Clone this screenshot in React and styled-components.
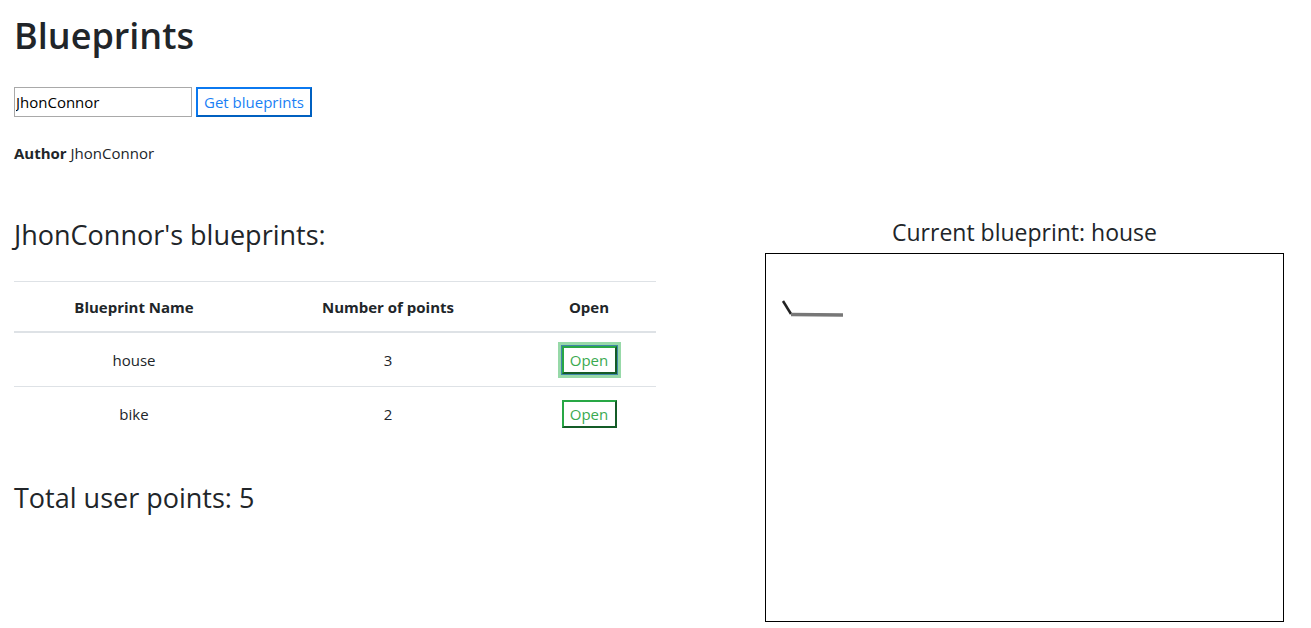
import React from "react";
import styled, { createGlobalStyle } from "styled-components";

const GlobalStyle = createGlobalStyle`
  body {
    margin: 0;
    background: #fff;
    color: #212529;
    font-family: "Open Sans", "Noto Sans", sans-serif;
  }
`;

const blueprints = [
  { name: "house", points: 3, focused: true },
  { name: "bike", points: 2 },
];

const Page = styled.div`
  padding: 0 14px;
`;

const Title = styled.h1`
  margin: 12px 0 0;
  font-size: 36px;
  font-weight: 600;
  line-height: 48px;
`;

const SearchForm = styled.div`
  display: flex;
  align-items: center;
  gap: 4px;
  margin-top: 27px;
`;

const AuthorInput = styled.input`
  box-sizing: border-box;
  width: 178px;
  height: 30px;
  padding: 0 1px;
  border: 1px solid #a9a9a9;
  font: inherit;
  font-size: 15px;
  color: #000;
`;

const GetButton = styled.button`
  box-sizing: border-box;
  height: 30px;
  padding: 0 6px;
  background: #fff;
  border: 2px solid #0b79f0;
  border-right-color: #0060c0;
  border-bottom-color: #0060c0;
  color: #1a7ff5;
  font: inherit;
  font-size: 15px;
`;

const AuthorLine = styled.p`
  margin: 24px 0 0;
  font-size: 15px;
  line-height: 24px;
`;

const Columns = styled.div`
  display: flex;
  gap: 109px;
  margin-top: 52px;
`;

const LeftColumn = styled.div`
  width: 642px;
`;

const SectionTitle = styled.h3`
  margin: 2px 0 0;
  font-size: 27px;
  font-weight: 500;
  line-height: 1.2;
`;

const Table = styled.table`
  width: 100%;
  margin-top: 30px;
  border-collapse: collapse;
  font-size: 15px;
  text-align: center;
`;

const HeadCell = styled.th`
  height: 49px;
  padding: 0;
  font-weight: 700;
  border-top: 1px solid #dee2e6;
  border-bottom: 2px solid #dee2e6;
  width: ${(p) => p.$w}px;
`;

const Cell = styled.td`
  height: 53px;
  padding: 0;
  border-bottom: ${(p) => (p.$last ? "none" : "1px solid #dee2e6")};
`;

const OpenButton = styled.button`
  box-sizing: border-box;
  width: 55px;
  height: 28px;
  padding: 0;
  background: #fff;
  border: 2px solid #28a745;
  border-right-color: #145c27;
  border-bottom-color: #145c27;
  color: #3aaa4f;
  font: inherit;
  font-size: 15px;
  box-shadow: ${(p) =>
    p.$focused ? "0 0 0 1px #3f86a8, 0 0 0 4px #97d9a8" : "none"};
`;

const TotalPoints = styled.h3`
  margin: 42px 0 0;
  font-size: 27px;
  font-weight: 500;
  line-height: 1.2;
`;

const RightColumn = styled.div`
  width: 519px;
  display: flex;
  flex-direction: column;
  align-items: center;
`;

const CanvasTitle = styled.h4`
  margin: 2px 0 0;
  font-size: 23px;
  font-weight: 500;
  line-height: 1.2;
`;

const Canvas = styled.div`
  box-sizing: border-box;
  width: 519px;
  height: 369px;
  margin-top: 6px;
  border: 1px solid #000;
`;

export default function App() {
  return (
    <>
      <GlobalStyle />
      <Page>
        <Title>Blueprints</Title>
        <SearchForm>
          <AuthorInput defaultValue="JhonConnor" />
          <GetButton>Get blueprints</GetButton>
        </SearchForm>
        <AuthorLine>
          <b>Author</b> JhonConnor
        </AuthorLine>
        <Columns>
          <LeftColumn>
            <SectionTitle>JhonConnor's blueprints:</SectionTitle>
            <Table>
              <thead>
                <tr>
                  <HeadCell $w={240}>Blueprint Name</HeadCell>
                  <HeadCell $w={268}>Number of points</HeadCell>
                  <HeadCell $w={134}>Open</HeadCell>
                </tr>
              </thead>
              <tbody>
                {blueprints.map((bp, i) => {
                  const last = i === blueprints.length - 1;
                  return (
                    <tr key={bp.name}>
                      <Cell $last={last}>{bp.name}</Cell>
                      <Cell $last={last}>{bp.points}</Cell>
                      <Cell $last={last}>
                        <OpenButton $focused={bp.focused}>Open</OpenButton>
                      </Cell>
                    </tr>
                  );
                })}
              </tbody>
            </Table>
            <TotalPoints>Total user points: 5</TotalPoints>
          </LeftColumn>
          <RightColumn>
            <CanvasTitle>Current blueprint: house</CanvasTitle>
            <Canvas>
              <svg width="517" height="367" viewBox="0 0 517 367">
                <line x1="17" y1="47" x2="25" y2="60" stroke="#222" strokeWidth="2.5" />
                <line x1="25" y1="60.5" x2="77" y2="61" stroke="#777" strokeWidth="3.5" />
              </svg>
            </Canvas>
          </RightColumn>
        </Columns>
      </Page>
    </>
  );
}
